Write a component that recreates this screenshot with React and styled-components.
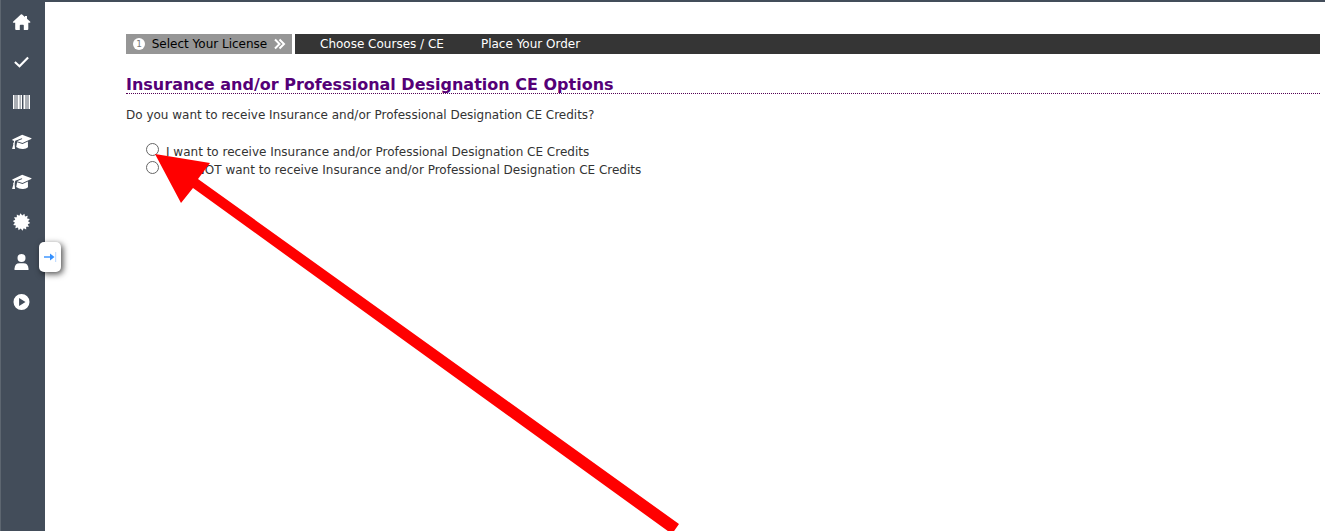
import React from "react";
import styled, { createGlobalStyle } from "styled-components";

const GlobalStyle = createGlobalStyle`
  * { box-sizing: border-box; }
  body {
    margin: 0;
    background: #fff;
    color: #333;
    font: 12px/18px Verdana, "DejaVu Sans", sans-serif;
  }
`;

const Page = styled.div`
  display: flex;
  min-height: 100vh;
  position: relative;
  overflow: hidden;
`;

const Sidebar = styled.nav`
  position: relative;
  flex: 0 0 45px;
  padding-top: 2px;
  background: #434d5a;
  border-left: 1px solid #5d6670;
`;

const NavLink = styled.a`
  display: flex;
  align-items: center;
  justify-content: center;
  width: 41px;
  height: 40px;
  color: #fff;
`;

const ExpandButton = styled.button`
  position: absolute;
  top: 242px;
  right: -16px;
  display: flex;
  align-items: center;
  justify-content: center;
  width: 22px;
  height: 30px;
  padding: 0;
  border: 0;
  border-radius: 5px;
  background: #fff;
  box-shadow: 2px 2px 6px rgba(0, 0, 0, 0.7);
`;

const Main = styled.main`
  flex: 1;
  min-width: 0;
  border-top: 2px solid #434d5a;
  padding: 32px 5px 0 81px;
`;

const Steps = styled.ol`
  display: flex;
  height: 20px;
  margin: 0;
  padding: 0;
  list-style: none;
  line-height: 20px;
  background: #353535;
`;

const CurrentStep = styled.li`
  display: flex;
  align-items: center;
  justify-content: space-between;
  flex: 0 0 169px;
  padding: 0 6px 0 7px;
  color: #000;
  background: #969696;
  border-right: 3px solid #fff;
  white-space: nowrap;
`;

const Step = styled.li`
  padding-left: 25px;
  margin-right: 12px;
  color: #fff;
  white-space: nowrap;
`;

const Number = styled.span`
  width: 12px;
  height: 12px;
  border-radius: 50%;
  background: #fff;
  color: #777;
  font-size: 9px;
  line-height: 12px;
  text-align: center;
`;

const Title = styled.h1`
  margin: 23px 0 0;
  border-bottom: 1px dotted #505;
  color: #550077;
  font-size: 16px;
  line-height: 16px;
`;

const Question = styled.p`
  margin: 12px 0 0;
`;

const Options = styled.div`
  padding: 19px 0 0 20px;
`;

const Option = styled.label`
  display: flex;
  align-items: flex-start;
  gap: 7px;
`;

const Radio = styled.input`
  appearance: none;
  flex: none;
  width: 13px;
  height: 13px;
  margin: 0;
  border: 1px solid #666;
  border-radius: 50%;
  background: #fff;
  &:checked { background: #555; }
`;

const Pointer = styled.svg`
  position: absolute;
  left: 155px;
  top: 154px;
  pointer-events: none;
`;

const Icon = ({ children }) => (
  <svg width="21" height="20" viewBox="-0.5 0 21 20" fill="currentColor" aria-hidden="true">
    {children}
  </svg>
);

const House = () => (
  <Icon>
    <path d="M10 2 L13.5 5 V4 H15.5 V6.8 L18.8 9.7 Q19.2 10.5 18.2 10.7 H16.8 V17 Q16.8 18 15.8 18 H12.3 V13.5 Q12.3 12.8 11.6 12.8 H9 Q8.3 12.8 8.3 13.5 V18 H4.6 Q3.7 18 3.7 17 V10.7 H2 Q1 10.5 1.5 9.7 L9.3 2.5 Q10 1.8 10.7 2.5 Z" />
  </Icon>
);

const Check = () => (
  <Icon>
    <path d="M3.4 10 L8 14.2 L16.6 5.4" fill="none" stroke="currentColor" strokeWidth="2.1" />
  </Icon>
);

const Barcode = () => (
  <Icon>
    <path d="M1.5 3h1v14h-1z M6.5 3h1.4v14H6.5z M9.5 3h1v14h-1z M12.5 3h1v14h-1z M17.5 3h1v14h-1z" />
    <path d="M1.5 3h9v14h-9z M11.5 3h7v14h-7z" opacity=".55" />
  </Icon>
);

const Graduation = () => (
  <Icon>
    <path d="M0.8 7.6 L10.7 2.8 L20 6.3 Q20.2 6.8 19.6 7.1 L11 11 L5.4 9.2 L10.8 7 L10.3 6.3 L3.8 8.8 Q3.1 10.2 3.2 12.5 L3.5 17 H0.6 L1.8 12.4 Q1.2 11.3 2.3 10.6 L2.6 9 L0.8 8.3 Z" />
    <path d="M5.6 10.2 L11 12 L16.4 9.6 L16.5 15.3 Q14.5 17.2 11.1 17 Q7.5 17.1 4.7 15.1 Z" />
  </Icon>
);

const sealPoints = Array.from({ length: 28 }, (_, i) => {
  const angle = ((i + 0.5) * Math.PI) / 14;
  const radius = i % 2 ? 6.6 : 8.8;
  return `${10 + radius * Math.cos(angle)},${10 + radius * Math.sin(angle)}`;
}).join(" ");

const Seal = () => (
  <Icon>
    <polygon points={sealPoints} />
  </Icon>
);

const Person = () => (
  <Icon>
    <circle cx="10" cy="6" r="4" />
    <path d="M3 18 V16.5 Q3.4 11.3 8 11.2 H12 Q16.6 11.3 17 16.5 V18 Z" />
  </Icon>
);

const Play = () => (
  <Icon>
    <path fillRule="evenodd" d="M10 2 A8 8 0 1 1 10 18 A8 8 0 1 1 10 2 M7.6 6 V14 L14 10 Z" />
  </Icon>
);

const links = [
  ["Home", House],
  ["Completed", Check],
  ["Barcode", Barcode],
  ["Courses", Graduation],
  ["Education", Graduation],
  ["Certificates", Seal],
  ["Profile", Person],
  ["Play", Play],
];

const options = [
  "I want to receive Insurance and/or Professional Designation CE Credits",
  "I DO NOT want to receive Insurance and/or Professional Designation CE Credits",
];

export default function App() {
  return (
    <Page>
      <GlobalStyle />
      <Sidebar>
        {links.map(([name, Glyph]) => (
          <NavLink href="#" key={name} aria-label={name}>
            <Glyph />
          </NavLink>
        ))}
        <ExpandButton type="button" aria-label="Expand menu">
          <svg width="14" height="12" viewBox="0 0 14 12" fill="none" aria-hidden="true">
            <path d="M1 6 H9" stroke="#3390ff" strokeWidth="1.4" />
            <path d="M7 2.5 L11.5 6 L7 9.5 Z" fill="#3390ff" />
            <path d="M12.7 1 V11" stroke="#b5d6ff" />
          </svg>
        </ExpandButton>
      </Sidebar>
      <Main>
        <Steps>
          <CurrentStep aria-current="step">
            <Number>1</Number>
            <span>Select Your License</span>
            <svg width="12" height="12" viewBox="0 0 12 12" fill="none" stroke="#fff" strokeWidth="2" aria-hidden="true">
              <path d="M1 1.5 L5.5 6 L1 10.5 M5.5 1.5 L10 6 L5.5 10.5" />
            </svg>
          </CurrentStep>
          <Step>Choose Courses / CE</Step>
          <Step>Place Your Order</Step>
        </Steps>
        <Title>Insurance and/or Professional Designation CE Options</Title>
        <Question>Do you want to receive Insurance and/or Professional Designation CE Credits?</Question>
        <Options>
          {options.map((text) => (
            <Option key={text}>
              <Radio type="radio" name="credits" />
              <span>{text}</span>
            </Option>
          ))}
        </Options>
      </Main>
      <Pointer width="526" height="377" viewBox="0 0 526 377" aria-hidden="true">
        <path d="M0 0 L55 9 L43 25 L524 370 L517 380 L38 34 L26 49 Z" fill="#f00" />
      </Pointer>
    </Page>
  );
}
